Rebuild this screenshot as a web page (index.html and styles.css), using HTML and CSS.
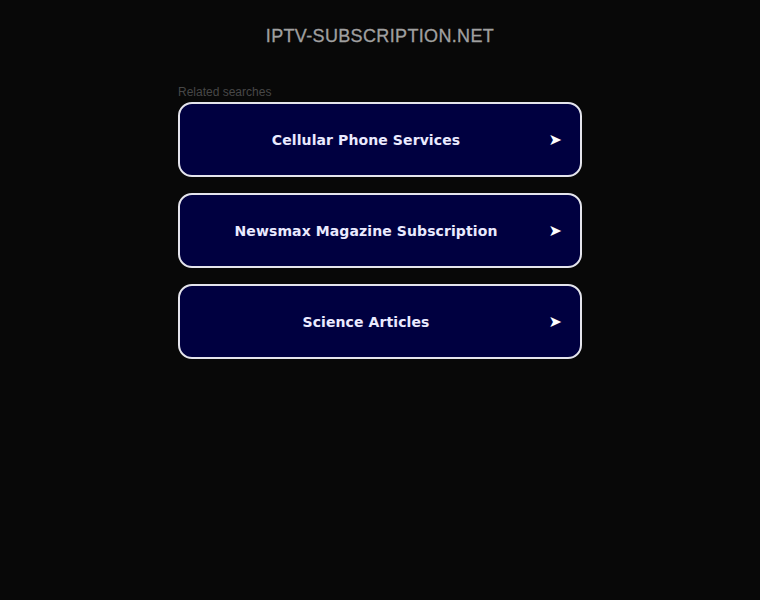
FILE: index.html
```html
<!DOCTYPE html>
<html lang="en">
<head>
    <meta charset="UTF-8">
    <title>iptv-subscription.net</title>
    <link rel="stylesheet" href="styles.css">
</head>
<body>

<div class="header">
    <h1 class="domain">iptv-subscription.net</h1>
</div>

<div class="content">
    <p class="related">Related searches</p>
    <a class="link-box" href="#">
        <span class="link-text">Cellular Phone Services</span>
        <span class="arrow">➤</span>
    </a>
    <a class="link-box" href="#">
        <span class="link-text">Newsmax Magazine Subscription</span>
        <span class="arrow">➤</span>
    </a>
    <a class="link-box" href="#">
        <span class="link-text">Science Articles</span>
        <span class="arrow">➤</span>
    </a>
</div>

</body>
</html>
```

FILE: styles.css
```css
body {
    margin: 0;
    padding: 0;
    background-color: #080808;
    font-family: "Liberation Sans", Arial, sans-serif;
    height: 600px;
}

.header {
    padding-top: 25px;
    text-align: center;
}

.domain {
    margin: 0;
    font-size: 18px;
    font-weight: normal;
    line-height: 22px;
    text-transform: uppercase;
    color: #a0a0a0;
    letter-spacing: 0.35px;
    -webkit-text-stroke: 0.3px #a0a0a0;
}

.content {
    width: 404px;
    margin: 0 auto;
    padding-top: 37px;
    display: flex;
    flex-direction: column;
    gap: 16px;
}

.related {
    margin: 1px 0 -13px 0;
    font-size: 12px;
    line-height: 14px;
    color: #474747;
}

.link-box {
    display: flex;
    align-items: center;
    justify-content: center;
    position: relative;
    height: 75px;
    box-sizing: border-box;
    border: 2px solid #e4e4ec;
    border-radius: 14px;
    background-color: #000040;
    text-decoration: none;
}

.link-text {
    font-family: "DejaVu Sans", sans-serif;
    font-weight: bold;
    font-size: 14px;
    color: #eaeaff;
    letter-spacing: 0.1px;
    margin-left: -28px;
}

.arrow {
    position: absolute;
    right: 18px;
    top: 50%;
    transform: translateY(-55%);
    font-family: "DejaVu Sans", sans-serif;
    font-size: 16px;
    color: #ffffff;
}
```
